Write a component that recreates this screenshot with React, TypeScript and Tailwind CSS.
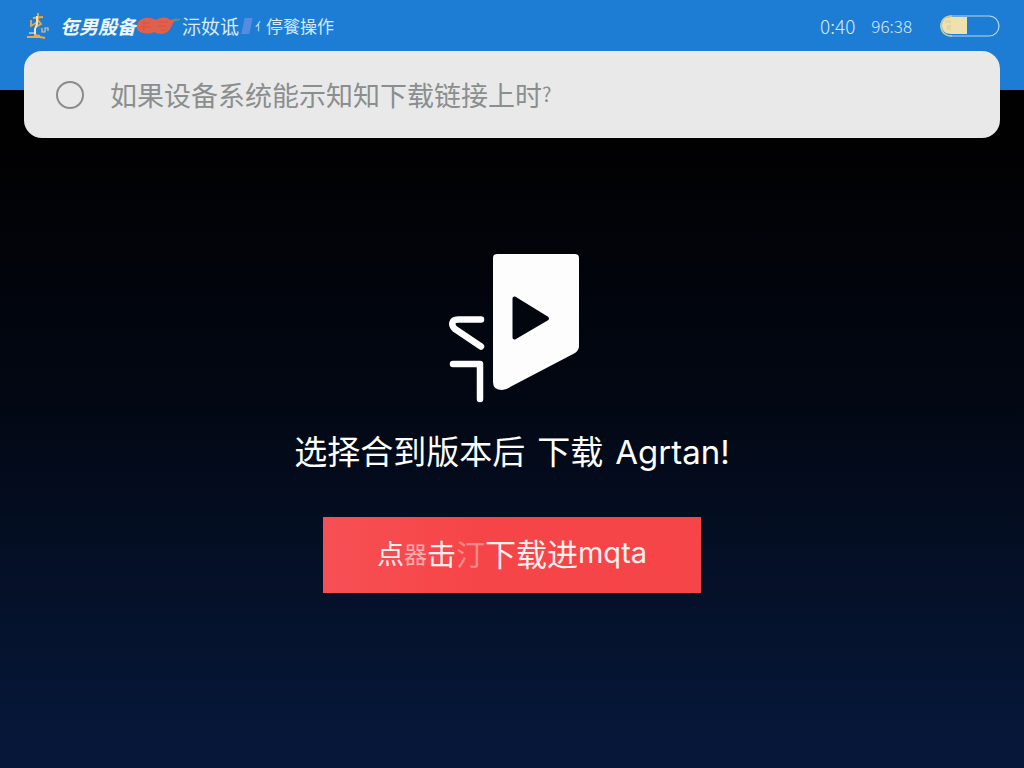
import React from "react";

function PalmIcon() {
  return (
    <svg viewBox="0 0 24 30" className="h-[30px] w-6" fill="none" aria-hidden="true">
      <path d="M12 2v7M7 7l10-1M5 9v6l8-5M12 9l3 4-5 3" stroke="#e9a94c" strokeWidth="1.800" />
      <path d="M11 5v8l-2 5v7" stroke="#fbe3b4" strokeWidth="2" />
      <path d="M1 26h13l5 1M8 24l6 1" stroke="#f0a94a" strokeWidth="2.200" />
      <path d="M16 17v4h3v-4h3v3" stroke="#d9c9a0" strokeWidth="1.200" />
      <path d="M3 22h5" stroke="#b9d3ee" strokeWidth="1.400" />
    </svg>
  );
}

function AlertMark() {
  return (
    <svg viewBox="0 0 46 18" className="h-[18px] w-[46px]" aria-hidden="true">
      <path d="M9 1c5-1 9 1 11 2 3-2 7-3 11-2l4 2 6-2-4 5c-2 6-5 10-11 11-4 0-6-1-8-2-3 2-7 2-11 1C2 15 0 12 1 8c1-4 4-6 8-7Z" fill="#e0604c" />
      <path d="M6 6h8M5 10h10M8 3v11M23 5h9M22 9h9M25 13h5" stroke="#d0544a" strokeWidth="1" />
      <path d="m37 4 7-2" stroke="#4b9a9b" strokeWidth="1.500" />
    </svg>
  );
}

function StatusBar() {
  return (
    <header className="flex h-[90px] items-start justify-between bg-[#1d7dd4] pl-[26px] pr-6 text-[#d8ebfa]">
      <div className="flex h-[52px] items-center">
        <PalmIcon />
        <span className="ml-[10px] text-[19px] font-bold italic leading-6 text-[#eef7fd]">㐌男殷备</span>
        <AlertMark />
        <span className="text-[19px] leading-6">沶奻诋</span>
        <span className="ml-1 h-4 w-2 -skew-x-12 bg-[#568be0]" />
        <span className="ml-1 flex items-center text-[17px] leading-6">
          <span className="text-[11px] leading-6">亻</span>
          <span>停餮操作</span>
        </span>
      </div>
      <div className="flex h-[52px] items-center">
        <span className="text-[19px] font-light leading-6">0:40</span>
        <span className="ml-4 text-[17px] font-light leading-6">96:38</span>
        <svg viewBox="0 0 60 22" className="ml-7 h-[22px] w-[60px]" role="img" aria-label="40%">
          <path d="M11 2h16v17H11C5 19 2 16 2 10.500S5 2 11 2Z" fill="#efe0b0" />
          <path d="M5 5h6v3H5zM7 10h4v5H7z" fill="#e4d5a2" />
          <rect x="1" y="1" width="58" height="20" rx="10" fill="none" stroke="#b8d8e8" strokeWidth="1.200" />
          <path d="M12 1C5 1 1 5 1 11s4 10 11 10" fill="none" stroke="#cdc78e" strokeWidth="1.500" />
        </svg>
      </div>
    </header>
  );
}

function Logo() {
  return (
    <svg viewBox="0 0 132 150" className="h-[150px] w-[132px]" aria-hidden="true">
      <path
        d="M48 1h78q4 0 4 4v88q0 4-4 7L62 133.500q-5 3.500-9 3.500-9 0-9-8V5q0-4 4-4Z"
        fill="#fdfdfe"
      />
      <path d="M65.500 45.500v39L98 65.500Z" fill="#02060f" stroke="#02060f" strokeWidth="4" strokeLinejoin="round" />
      <path
        d="M32 66.500H9c-7 0-7 6-3 9.500l26 17.500M4 111h27v35"
        fill="none"
        stroke="#fdfdfe"
        strokeWidth="6.500"
        strokeLinecap="round"
        strokeLinejoin="round"
      />
    </svg>
  );
}

export default function App() {
  return (
    <div className="flex min-h-screen flex-col bg-[linear-gradient(to_bottom,#000000_0px,#010102_140px,#020713_400px,#051129_590px,#06183b_100%)] font-['Noto_Sans_CJK_SC',sans-serif]">
      <StatusBar />
      <label className="mx-6 -mt-[39px] flex h-[87px] items-center rounded-[18px] bg-[#e9e9ea] pl-8">
        <input
          type="radio"
          name="link"
          className="size-7 shrink-0 appearance-none rounded-full border-2 border-[#8b8b8d] checked:bg-[#8b8b8d]"
        />
        <span className="ml-[26px] text-[27px] leading-10 text-[#8b8e8e]">
          如果设备系统能示知知下载链接上时<span className="align-[4px] text-xl">?</span>
        </span>
      </label>
      <main className="flex flex-1 flex-col items-center pt-[115px]">
        <div className="mr-[-6px]">
          <Logo />
        </div>
        <h1 className="mt-[25px] flex flex-wrap items-baseline justify-center gap-x-3 font-['Inter','Noto_Sans_CJK_SC',sans-serif] text-[33px] font-normal leading-[48px] text-white">
          <span>选择合到版本后</span>
          <span>下载</span>
          <span>Agrtan!</span>
        </h1>
        <button
          type="button"
          className="mt-[41px] flex h-[76px] w-[378px] items-center justify-center bg-[linear-gradient(to_right,#f65054,#f64548_40%,#f64548)] pb-1 leading-10 text-[#fff0ee]"
        >
          <span className="text-[27px]">点</span>
          <span className="text-[23px] opacity-60">器</span>
          <span className="text-[29px]">击</span>
          <span className="text-[29px] opacity-40">汀</span>
          <span className="text-[31px]">下载进</span>
          <span className="font-['Inter',sans-serif] text-[29px]">mqta</span>
        </button>
      </main>
    </div>
  );
}
